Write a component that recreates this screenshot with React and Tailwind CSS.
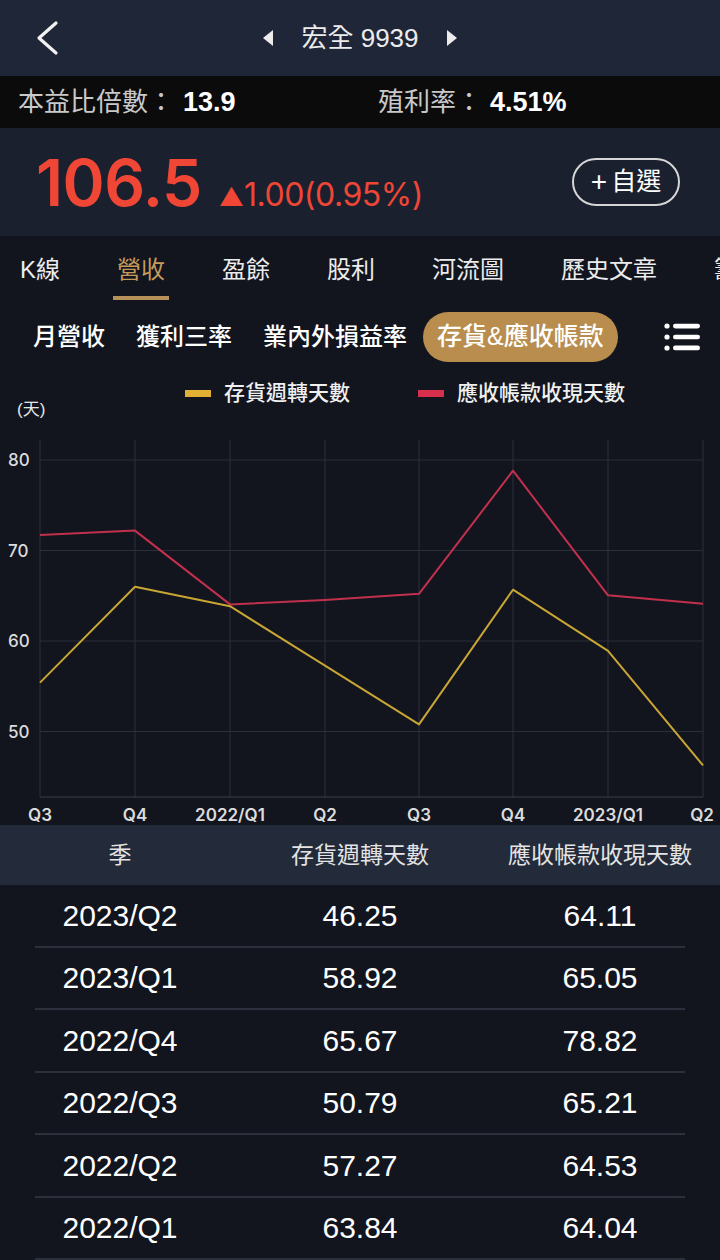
import React from 'react';

// chart data, oldest first
const xs = [40, 135, 230, 325, 419, 513, 608, 703];
const quarterLabels = ['Q3', 'Q4', '2022/Q1', 'Q2', 'Q3', 'Q4', '2023/Q1', 'Q2'];
const inventory = [55.4, 66.0, 63.84, 57.27, 50.79, 65.67, 58.92, 46.25];
const receivable = [71.7, 72.2, 64.04, 64.53, 65.21, 78.82, 65.05, 64.11];
const yOf = (v) => 460 + (80 - v) * 9.05;
const toPoints = (arr) => arr.map((v, i) => `${xs[i]},${yOf(v).toFixed(1)}`).join(' ');

const rows = [
  { q: '2023/Q2', inv: '46.25', rec: '64.11' },
  { q: '2023/Q1', inv: '58.92', rec: '65.05' },
  { q: '2022/Q4', inv: '65.67', rec: '78.82' },
  { q: '2022/Q3', inv: '50.79', rec: '65.21' },
  { q: '2022/Q2', inv: '57.27', rec: '64.53' },
  { q: '2022/Q1', inv: '63.84', rec: '64.04' },
];

const tabs = ['K線', '營收', '盈餘', '股利', '河流圖', '歷史文章', '籌碼'];
const subTabs = ['月營收', '獲利三率', '業內外損益率'];

const Chart = () => (
  <svg width="720" height="405" viewBox="0 420 720 405" className="block">
    {/* vertical grid */}
    {xs.map((x) => (
      <line key={x} x1={x} y1="440" x2={x} y2="797" stroke="#2c313c" strokeWidth="1" />
    ))}
    {/* horizontal grid */}
    {[80, 70, 60, 50].map((v) => (
      <line key={v} x1="40" y1={yOf(v)} x2="703" y2={yOf(v)} stroke="#2a2f3a" strokeWidth="1" />
    ))}
    <line x1="40" y1="797" x2="703" y2="797" stroke="#3a3f4a" strokeWidth="1" />
    {[80, 70, 60, 50].map((v) => (
      <text key={v} x="8" y={yOf(v) + 6} fill="#dcdcdc" fontSize="17" fontWeight="500" fontFamily="Inter, sans-serif">
        {v}
      </text>
    ))}
    <polyline points={toPoints(receivable)} fill="none" stroke="#c2304e" strokeWidth="2" strokeLinejoin="round" />
    <polyline points={toPoints(inventory)} fill="none" stroke="#c9a634" strokeWidth="2" strokeLinejoin="round" />
    {quarterLabels.map((l, i) => (
      <text
        key={i}
        x={i === 7 ? 702 : i === 0 ? 40 : xs[i]}
        y="821"
        textAnchor="middle"
        fill="#dcdcdc"
        fontSize="17"
        fontWeight="600"
        fontFamily="Inter, sans-serif"
      >
        {l}
      </text>
    ))}
  </svg>
);

const App = () => {
  return (
    <div className="w-[720px] min-h-screen bg-[#12151e] overflow-hidden font-[family-name:Liberation_Sans,Noto_Sans_CJK_TC,sans-serif]">
      {/* top nav */}
      <div className="h-[76px] bg-[#1f2637] flex items-center relative">
        <div className="pl-[34px]">
          <svg width="26" height="36" viewBox="0 0 26 36">
            <path d="M22 3 L5 18 L22 33" fill="none" stroke="#f2f2f2" strokeWidth="3.2" strokeLinecap="round" strokeLinejoin="round" />
          </svg>
        </div>
        <div className="flex-1 flex items-center justify-center pr-[60px] gap-[27px]">
          <svg width="11" height="16" viewBox="0 0 11 16">
            <path d="M10 0 L0 8 L10 16 Z" fill="#ececec" />
          </svg>
          <span className="text-[26px] text-[#ececec]">宏全 9939</span>
          <svg width="11" height="16" viewBox="0 0 11 16">
            <path d="M1 0 L11 8 L1 16 Z" fill="#ececec" />
          </svg>
        </div>
      </div>

      {/* ratio bar */}
      <div className="h-[52px] bg-[#0b0b0c] flex items-center text-[26px]">
        <div className="w-[360px] pl-[18px] flex items-center">
          <span className="text-[#c9c9c9]">本益比倍數：</span>
          <span className="text-white font-bold text-[27px] ml-[9px]">13.9</span>
        </div>
        <div className="pl-[18px] flex items-center">
          <span className="text-[#c9c9c9]">殖利率：</span>
          <span className="text-white font-bold text-[27px] ml-[8px]">4.51%</span>
        </div>
      </div>

      {/* price */}
      <div className="h-[108px] bg-[#1b202e] flex items-center pl-[36px] pr-[40px]">
        <div className="flex items-baseline text-[#f04636] pt-[6px] font-[family-name:Inter,sans-serif]">
          <span className="text-[64px] font-semibold leading-none tracking-[-0.5px]">106.5</span>
          <span className="text-[25px] ml-[17px]">▲</span>
          <span className="text-[32px] tracking-[-0.5px]">1.00(0.95%)</span>
        </div>
        <button className="ml-auto w-[108px] h-[48px] rounded-full border-2 border-[#d6d6d6] flex items-center justify-center text-white text-[25px] gap-[4px]">
          <span className="text-[28px] leading-none font-light">+</span>
          <span>自選</span>
        </button>
      </div>

      {/* main tabs */}
      <div className="h-[64px] flex gap-[57px] pl-[20px] pt-[18px] whitespace-nowrap overflow-hidden text-[24px]">
        {tabs.map((t) => (
          <div key={t} className="flex flex-col items-center shrink-0">
            <span className={`leading-[32px] ${t === '營收' ? 'text-[#c79a5c]' : 'text-[#ececec]'}`}>{t}</span>
            {t === '營收' && <div className="mt-[10px] -mx-[4px] w-[56px] h-[4px] bg-[#b8905a]" />}
          </div>
        ))}
      </div>

      {/* sub tabs */}
      <div className="pt-[12px] flex items-center pl-[33px] pr-[20px]">
        <div className="flex items-center gap-[31px] text-[24px] font-medium text-white">
          {subTabs.map((s) => (
            <span key={s}>{s}</span>
          ))}
        </div>
        <div className="ml-[16px] h-[50px] px-[14px] rounded-full bg-[#b88d4e] flex items-center text-[25px] font-medium text-white">
          存貨&amp;應收帳款
        </div>
        <div className="ml-auto">
          <svg width="36" height="28" viewBox="0 0 36 28">
            <circle cx="3" cy="3" r="2.6" fill="#fff" />
            <circle cx="3" cy="14" r="2.6" fill="#fff" />
            <circle cx="3" cy="25" r="2.6" fill="#fff" />
            <rect x="9" y="0.8" width="27" height="4.6" rx="2.3" fill="#fff" />
            <rect x="9" y="11.7" width="27" height="4.6" rx="2.3" fill="#fff" />
            <rect x="9" y="22.6" width="27" height="4.6" rx="2.3" fill="#fff" />
          </svg>
        </div>
      </div>

      {/* legend */}
      <div className="mt-[10px] h-[42px] flex items-center pl-[185px] text-[21px] font-medium text-[#f0f0f0]">
        <div className="w-[26px] h-[7px] bg-[#e2b034]" />
        <span className="ml-[13px]">存貨週轉天數</span>
        <div className="ml-[68px] w-[26px] h-[7px] bg-[#d8304c]" />
        <span className="ml-[13px]">應收帳款收現天數</span>
      </div>
      <div className="-mt-[14px] h-[20px] leading-[20px] pl-[17px] text-[17px] text-[#e6e6e6]">(天)</div>

      <Chart />

      {/* table */}
      <div className="h-[60px] bg-[#232a3a] grid grid-cols-3 items-center text-center text-[23px] text-[#e4e4e4]">
        <span>季</span>
        <span>存貨週轉天數</span>
        <span>應收帳款收現天數</span>
      </div>
      {rows.map((r) => (
        <div key={r.q} className="h-[62.5px] flex flex-col">
          <div className="flex-1 grid grid-cols-3 items-center text-center text-[30px] text-white">
            <span>{r.q}</span>
            <span>{r.inv}</span>
            <span>{r.rec}</span>
          </div>
          <div className="mx-[35px] h-[2px] bg-[#2b303c]" />
        </div>
      ))}
    </div>
  );
};

export default App;
